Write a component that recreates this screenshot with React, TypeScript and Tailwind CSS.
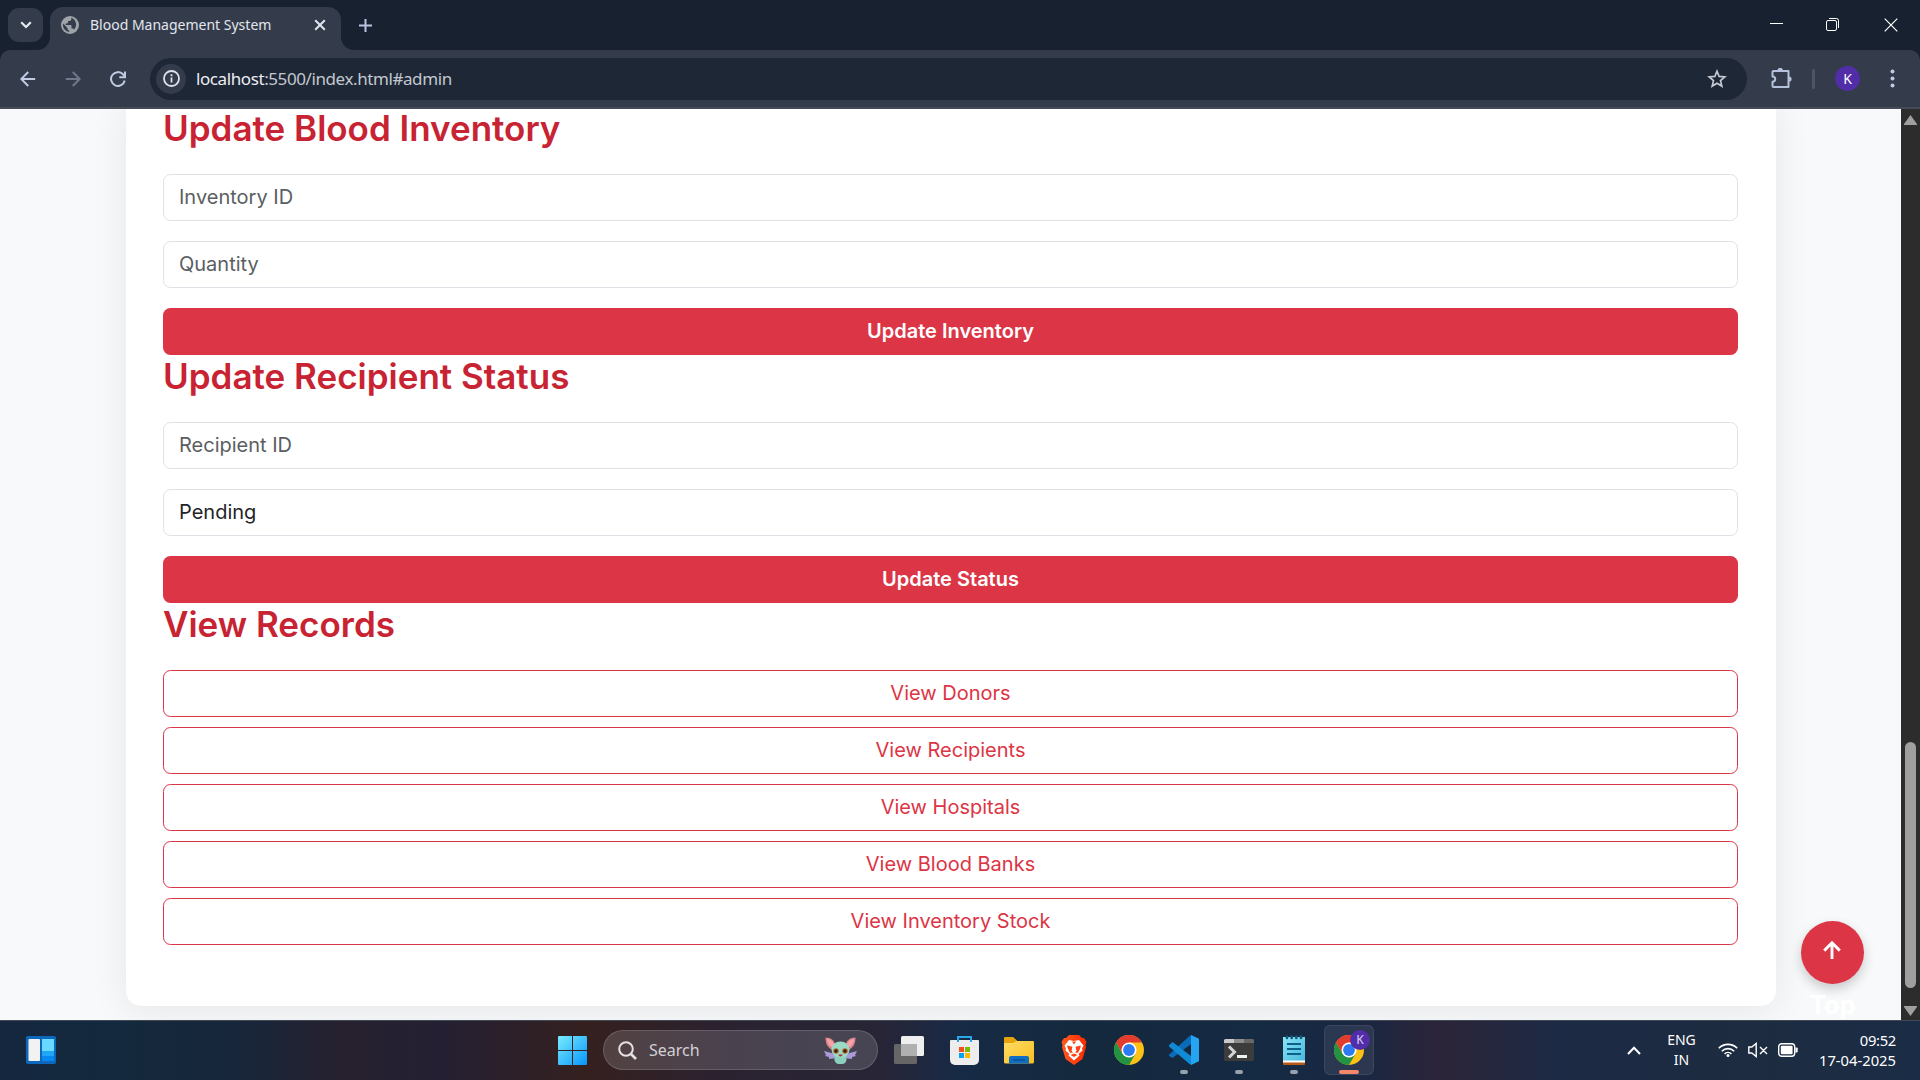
import React from "react";

const SEGOE = "font-['Noto_Sans',sans-serif]";

function Globe() {
  return (
    <svg width="18" height="18" viewBox="0 0 18 18" className="shrink-0">
      <circle cx="9" cy="9" r="9" fill="#a0a4a9" />
      <path d="M10.3 1.8v1.4c0 .9-.7 1.7-1.6 1.7H7v1.6c0 .5-.4.9-.9.9H4.600v1.700h5c.5 0 .9.400.9.900v2.400h.900c.8 0 1.400.5 1.600 1.200A7.200 7.200 0 0 0 10.300 1.800zM8.200 16.100v-1.600c-.9 0-1.700-.8-1.700-1.700v-.9L2.100 7.400A7.200 7.200 0 0 0 8.200 16.100z" fill="#343c4c" />
    </svg>
  );
}

function BrowserTop() {
  return (
    <div className={`h-[109px] shrink-0 bg-[#182130] ${SEGOE}`}>
      <div className="flex h-[50px] pl-2">
        <div className="mt-2 flex h-[34px] w-[35px] items-center justify-center rounded-[11px] bg-[#343c4c]">
          <svg width="12" height="8" viewBox="0 0 12 8" fill="none" stroke="#e6e9ef" strokeWidth="2.200"><path d="M1.200 1.200 6 6l4.800-4.800" /></svg>
        </div>
        <div className="relative ml-[7px] mt-[7px] flex h-[43px] w-[291px] items-center rounded-t-[13px] bg-[#343c4c] pb-[7px] pl-[11px]">
          <svg className="absolute -left-[13px] bottom-0" width="13" height="13"><path d="M13 0v13H0A13 13 0 0 0 13 0z" fill="#343c4c" /></svg>
          <svg className="absolute -right-[13px] bottom-0" width="13" height="13"><path d="M0 0v13h13A13 13 0 0 1 0 0z" fill="#343c4c" /></svg>
          <Globe />
          <span className="ml-[11px] w-[181px] whitespace-nowrap text-[14px] leading-5 text-[#e3e6ec]">Blood Management System</span>
          <svg width="12" height="12" viewBox="0 0 12 12" stroke="#e3e6ec" strokeWidth="2" className="ml-[43px]"><path d="M1.200 1.200l9.600 9.600M10.800 1.200l-9.600 9.600" /></svg>
        </div>
        <svg width="13" height="13" viewBox="0 0 13 13" stroke="#b9c5e0" strokeWidth="2" className="ml-[18px] mt-[19px]"><path d="M6.500 0v13M0 6.500h13" /></svg>
        <div className="ml-auto flex h-[49px] items-center pr-[22px]">
          <svg width="13" height="13" stroke="#fff"><path d="M0 5.500h13" /></svg>
          <svg width="14" height="14" className="ml-[43px]" fill="none" stroke="#fff">
            <rect x=".5" y="2.500" width="10" height="10" rx="1.500" />
            <path d="M3 .5h7.500a2 2 0 0 1 2 2V10" />
          </svg>
          <svg width="14" height="14" className="ml-[44px]" stroke="#fff" strokeWidth="1.200"><path d="M.7.7l12.600 12.600M13.300.7.7 13.300" /></svg>
        </div>
      </div>
      <div className="flex h-[59px] items-center rounded-t-[10px] border-b-2 border-[#454b57] bg-[#343c4c] pl-5">
        <svg width="16" height="16" viewBox="0 0 16 16" fill="none" stroke="#c0cbe3" strokeWidth="2"><path d="M15.200 8H1.500M8.200 1 1.300 8l6.900 7" /></svg>
        <svg width="16" height="16" viewBox="0 0 16 16" fill="none" stroke="#6f798b" strokeWidth="2" className="ml-[29px]"><path d="M.8 8h13.700M7.800 1l6.900 7-6.900 7" /></svg>
        <svg width="16" height="16" viewBox="0 0 16 16" fill="none" stroke="#c0cbe3" strokeWidth="2" className="ml-[29px]">
          <path d="M14.700 9.500A6.900 6.900 0 1 1 13 3.300l1.600 1.800" /><path d="M15 .5v5.700H9.300" />
        </svg>
        <div className="ml-6 flex h-[42px] w-[1597px] items-center rounded-full bg-[#1e2736] pl-1.5">
          <div className="flex size-[30px] items-center justify-center rounded-full bg-[#343c4c]">
            <svg width="17" height="17" viewBox="0 0 17 17" fill="none" stroke="#dfe2ea" strokeWidth="1.800"><circle cx="8.500" cy="8.500" r="7.500" /><path d="M8.500 7.500v5M8.500 4.300v1.900" /></svg>
          </div>
          <span className="ml-[10px] whitespace-nowrap text-[17px] leading-6 tracking-[-0.41px] text-[#c3c7cf]"><span className="text-[#eceef3]">localhost</span>:5500/index.html#admin</span>
          <svg width="20" height="20" viewBox="0 0 20 20" fill="none" stroke="#c6c8d0" strokeWidth="1.700" className="ml-auto mr-5"><path d="M10 2.200l2.150 5.250 5.650.45-4.300 3.700 1.350 5.500L10 14.150 5.150 17.100l1.350-5.500-4.300-3.700 5.650-.45z" /></svg>
        </div>
        <svg width="21" height="21" viewBox="0 0 21 21" className="ml-6">
          <path d="M2.500 3h15v5.300V19h-15a1 1 0 0 1-1-1v-4.200a2.700 2.700 0 0 0 0-5.400V4a1 1 0 0 1 1-1z" fill="none" stroke="#b5c2dc" strokeWidth="2" strokeLinejoin="round" />
          <path d="M6.500 2.500a2.700 2.700 0 0 1 5.400 0zM18 8.400a2.600 2.600 0 0 1 0 5.200z" fill="#b5c2dc" />
        </svg>
        <div className="ml-5 h-5 w-[3px] rounded bg-[#4c5566]" />
        <div className="ml-5 flex size-[25px] items-center justify-center rounded-full bg-[#512da8] text-[14px] leading-none text-white">K</div>
        <svg width="5" height="19" fill="#c0cbe3" className="ml-[30px]"><circle cx="2.500" cy="2.500" r="2" /><circle cx="2.500" cy="9.500" r="2" /><circle cx="2.500" cy="16.500" r="2" /></svg>
      </div>
    </div>
  );
}

const Heading = ({ children }: { children: string }) => (
  <h2 className="mb-[25px] h-[42px] text-[35px] font-semibold leading-[42px] text-[#c82333]">{children}</h2>
);
const Field = ({ children, dark }: { children: string; dark?: boolean }) => (
  <div className={`mb-5 flex h-[47px] items-center rounded-[7.500px] border border-[#dee2e6] px-[15px] pb-0.5 text-xl ${dark ? "text-[#212529]" : "text-[#5a5e62]"}`}>{children}</div>
);
const Solid = ({ children }: { children: string }) => (
  <button className="block h-[47px] w-full rounded-[7.500px] bg-[#dc3545] pb-0.5 text-center text-xl font-semibold text-white">{children}</button>
);

function Page() {
  return (
    <div className="relative flex min-h-0 flex-1 overflow-hidden bg-[#f8f9fb]">
      <main className="-mt-2 ml-[126px] h-[905px] w-[1650px] shrink-0 rounded-b-[15px] bg-white pl-[37px] pr-[38px] pt-1.5 font-['Inter',sans-serif] shadow-[0_5px_37px_rgba(0,0,0,0.08)]">
        <Heading>Update Blood Inventory</Heading>
        <Field>Inventory ID</Field>
        <Field>Quantity</Field>
        <Solid>Update Inventory</Solid>
        <Heading>Update Recipient Status</Heading>
        <Field>Recipient ID</Field>
        <Field dark>Pending</Field>
        <Solid>Update Status</Solid>
        <Heading>View Records</Heading>
        <div className="flex flex-col gap-2.5">
          {["View Donors", "View Recipients", "View Hospitals", "View Blood Banks", "View Inventory Stock"].map((t) => (
            <button key={t} className="h-[47px] rounded-[7.500px] border border-[#dc3545] pb-0.5 text-xl text-[#dc3545]">{t}</button>
          ))}
        </div>
      </main>
      <div className="absolute left-[1801px] top-[812px] flex w-[63px] flex-col items-center font-['Inter',sans-serif]">
        <div className="flex size-[63px] items-center justify-center rounded-full bg-[#dc3545] pb-1.5 pr-px shadow-[0_5px_12px_rgba(0,0,0,0.2)]">
          <svg width="18" height="18" viewBox="0 0 18 18" fill="none" stroke="#fff" strokeWidth="2.900"><path d="M9 18V2M1.200 9.600 9 1.800l7.800 7.800" /></svg>
        </div>
        <span className="mt-[3px] text-[25px] font-bold leading-[37px] text-white">Top</span>
      </div>
      <div className="ml-auto flex w-[19px] flex-col items-center bg-[#2c2c2c]">
        <svg width="13" height="10" className="mt-[6px]" fill="#9f9f9f"><path d="M6.500 0 13 9v1H0V9z" /></svg>
        <div className="mt-[617px] h-[246px] w-[11px] rounded-full bg-[#9f9f9f]" />
        <svg width="13" height="10" className="mt-[18px]" fill="#9f9f9f"><path d="M6.500 10 13 1V0H0v1z" /></svg>
      </div>
    </div>
  );
}

function Chrome() {
  return (
    <svg width="30" height="30" viewBox="0 0 30 30">
      <circle cx="15" cy="15" r="15" fill="#fbc116" />
      <path d="M2 7.500A15 15 0 0 1 28 7.500H15L8.500 18.800z" fill="#e33b2e" />
      <path d="M2 7.500A15 15 0 0 0 15 30l6.500-11.200H8.500z" fill="#229342" />
      <circle cx="15" cy="15" r="7.500" fill="#fff" /><circle cx="15" cy="15" r="5.900" fill="#2c7bf2" />
    </svg>
  );
}

const Store = () => (
  <svg width="29" height="29" viewBox="0 0 29 29">
    <path d="M0 5a1 1 0 0 1 1-1h27a1 1 0 0 1 1 1v19a5 5 0 0 1-5 5H5a5 5 0 0 1-5-5z" fill="#ededee" />
    <path d="M8 6V1h13v5" fill="none" stroke="#28a8ea" strokeWidth="2" />
    <path d="M9 11h5v5H9z" fill="#f25022" /><path d="M15 11h5v5h-5z" fill="#7fba00" /><path d="M9 17h5v5H9z" fill="#00a4ef" /><path d="M15 17h5v5h-5z" fill="#ffb900" />
  </svg>
);
const TaskView = () => (
  <svg width="30" height="28" viewBox="0 0 30 28">
    <rect x="7" width="23" height="20" rx="1.500" fill="#efefef" />
    <rect y="8" width="23" height="20" rx="1.500" fill="#666" /><path d="M7 8h16v12H7z" fill="#b0b0b0" />
  </svg>
);
const Folder = () => (
  <svg width="30" height="27" viewBox="0 0 30 27">
    <path d="M0 1a1 1 0 0 1 1-1h8l4 3.500V8H0z" fill="#e5a50a" />
    <defs><linearGradient id="fo" x2="1" y2="1"><stop stopColor="#ffdc66" /><stop offset="1" stopColor="#f9be20" /></linearGradient></defs>
    <path d="M0 6h9l4-2h16a1 1 0 0 1 1 1v20a1.500 1.500 0 0 1-1.500 1.500h-27A1.500 1.500 0 0 1 0 25z" fill="url(#fo)" />
    <path d="M5 26.500V21a2 2 0 0 1 2-2h16a2 2 0 0 1 2 2v5.500z" fill="#0f6fc5" /><path d="M9 23h12" stroke="#0a4a86" strokeWidth="1.300" />
  </svg>
);
const Brave = () => (
  <svg width="26" height="30" viewBox="0 0 26 30">
    <defs><linearGradient id="br" x2="1"><stop stopColor="#ff5a1f" /><stop offset="1" stopColor="#ff2a00" /></linearGradient></defs>
    <path d="M8 0h10l3 3h2l2.500 4-1 3 .5 2-3.500 12L13 30 4.500 24 1 12l.5-2-1-3L3 3h2z" fill="url(#br)" />
    <path d="M8 5l5 1 5-1 4.500 5.500-1.500 3 .5 2-4 3.500 1 1.500-5.500 5-5.500-5 1-1.500-4-3.500.5-2-1.500-3z" fill="#fff" />
    <path d="M6 10.500l5.500 1.200-1 4 1.500 2H9L7 14zM20 10.500l-5.500 1.200 1 4-1.500 2h3l2-3.700zM9.500 20l3.500-1.500 3.500 1.500L13 22zM11 6.500l2 3 2-3z" fill="#ff4010" />
  </svg>
);
const Code = () => (
  <svg width="30" height="30" viewBox="0 0 30 30">
    <path d="M0 19.800 20.500 1l1.500-.8V9L3.500 23 0 21z" fill="#0a6cb8" />
    <path d="M0 10.200 3.500 7 22 21v8.800l-1.500-.8L0 11.500z" fill="#118ad6" />
    <path d="M22 0l7 3.200a1.500 1.500 0 0 1 1 1.400v20.800a1.500 1.500 0 0 1-1 1.400L22 30z" fill="#25a4f2" />
  </svg>
);
const Terminal = () => (
  <svg width="30" height="22" viewBox="0 0 30 22">
    <rect width="30" height="22" rx="1.500" fill="#3c3c3c" /><path d="M0 4V1.500A1.500 1.500 0 0 1 1.500 0H10v4z" fill="#c9c9c9" /><path d="M10 0h10v4H10z" fill="#8d8d8d" /><path d="M20 0h8.500A1.500 1.500 0 0 1 30 1.500V4H20z" fill="#686868" />
    <path d="M5 7.500l5.500 5.500L5 18.500" fill="none" stroke="#d5d5d5" strokeWidth="3" /><path d="M13 16h10v3H13z" fill="#f0f0f0" />
  </svg>
);
const Notepad = () => (
  <svg width="22" height="30" viewBox="0 0 22 30">
    <rect y="4" width="22" height="26" rx="1" fill="#b65a17" /><path d="M0 25h22v2.500H0z" fill="#fff" />
    <defs><linearGradient id="np" x2="1" y2="1"><stop stopColor="#8be4f7" /><stop offset="1" stopColor="#46b9dc" /></linearGradient></defs>
    <path d="M0 2h22v23.500H0z" fill="url(#np)" />
    <path d="M4 9h14M4 14h14M4 19h14" stroke="#0d6188" strokeWidth="2" />
    <path d="M4 1.500v1.500M8.700 1.500v1.500M13.300 1.500v1.500M18 1.500v1.500" stroke="#125a78" strokeWidth="2.600" strokeLinecap="round" />
  </svg>
);
const Creature = () => (
  <svg width="33" height="27" viewBox="0 0 33 27">
    <path d="M11 17 0 14l2 4-1 1 4 1v2l8-1zM22 17l11-3-2 4 1 1-4 1v2l-8-1z" fill="#a99bd8" />
    <path d="M1.500.5c6 0 9 3 10 8l-4 4C3 10 1.500 6 1.500.5zM31.500.5c-6 0-9 3-10 8l4 4c4.500-2.500 6-6.500 6-12z" fill="#d9838c" />
    <path d="M3 1.800c4 .5 6.500 3 7.500 6.500L8 10.500C4.500 8.500 3 5 3 1.800zM30 1.800c-4 .5-6.500 3-7.500 6.500l2.500 2.200c3.500-2 5-5.500 5-8.700z" fill="#f7a3a6" />
    <path d="M10.500 18h12v4.500a4.500 4.500 0 0 1-4.500 4.500h-3a4.500 4.500 0 0 1-4.500-4.500z" fill="#8ccfbd" /><ellipse cx="16.500" cy="12.500" rx="9" ry="8" fill="#9bd9c5" />
    <circle cx="12" cy="14" r="2.800" fill="#b06a2c" /><circle cx="21" cy="14" r="2.800" fill="#b06a2c" /><circle cx="12" cy="14" r="1.700" fill="#3b1b10" /><circle cx="21" cy="14" r="1.700" fill="#3b1b10" />
    <path d="M14.500 17.500h4a2 2 0 0 1-4 0z" fill="#a93240" />
  </svg>
);

function Slot({ children, dot, active }: { children: React.ReactNode; dot?: boolean; active?: boolean }) {
  return (
    <div className={`relative flex h-[50px] w-[50px] shrink-0 items-center justify-center rounded-md ${active ? "border border-white/8 bg-white/8" : ""}`}>
      {children}
      {dot && <div className="absolute bottom-[1px] h-1 w-2 rounded-full bg-[#98a1ae]" />}
      {active && <div className="absolute bottom-0 h-1 w-5 rounded-full bg-[#f4866a]" />}
    </div>
  );
}

function Taskbar() {
  return (
    <div className={`flex h-[60px] shrink-0 items-center border-t border-[#414954] bg-[linear-gradient(90deg,#14273f_0px,#14293d_120px,#17263b_240px,#27212f_340px,#242033_440px,#35201f_590px,#2b2230_720px,#272536_880px,#172a46_960px,#14293d_1080px,#152a43_1250px,#1a2742_1360px,#2b2438_1440px,#1c2a45_1560px,#1d2c40_1750px,#1b2c46_1920px)] pb-px text-white ${SEGOE}`}>
      <svg width="30" height="28" viewBox="0 0 30 28" className="ml-[26px]">
        <rect width="30" height="28" rx="2" fill="#0c68bd" /><rect x="2.500" y="3" width="11.500" height="22" rx="1" fill="#f2f2f2" /><path d="M16 3h12v12H16z" fill="#6ad9ff" /><path d="M16 15h12v5H16z" fill="#21a5f7" /><path d="M16 20h12v5H16z" fill="#0689f0" />
      </svg>
      <svg width="29" height="29" viewBox="0 0 29 29" className="ml-[502px]">
        <defs><linearGradient id="wi" gradientUnits="userSpaceOnUse" x1="0" y1="0" x2="29" y2="29"><stop stopColor="#78edff" /><stop offset="1" stopColor="#0794fb" /></linearGradient></defs>
        <path d="M0 1a1 1 0 0 1 1-1h13v14H0zM15 0h13a1 1 0 0 1 1 1v13H15zM0 15h14v14H1a1 1 0 0 1-1-1zM15 15h14v13a1 1 0 0 1-1 1H15z" fill="url(#wi)" />
      </svg>
      <div className="ml-4 flex h-10 w-[275px] items-center rounded-full border border-white/15 bg-white/15 pl-3.5">
        <svg width="19" height="19" viewBox="0 0 19 19" fill="none" stroke="#e4e0e4" strokeWidth="2"><circle cx="8" cy="8" r="6.800" /><path d="M13 13l5 5" strokeWidth="2.600" /></svg>
        <span className="ml-3 text-[16px] leading-6 text-[#d4d0d6]">Search</span>
        <div className="ml-auto mr-5"><Creature /></div>
      </div>
      <div className="ml-[6px] flex gap-[5px]">
        <Slot><TaskView /></Slot>
        <Slot><Store /></Slot>
        <Slot><Folder /></Slot>
        <Slot><Brave /></Slot>
        <Slot><Chrome /></Slot>
        <Slot dot><Code /></Slot>
        <Slot dot><Terminal /></Slot>
        <Slot dot><Notepad /></Slot>
        <Slot active>
          <Chrome />
          <div className="absolute right-[3px] top-1 flex size-5 items-center justify-center rounded-full bg-[#512da8] text-xs font-medium text-[#cdbdf0]">K</div>
        </Slot>
      </div>
      <div className="ml-auto flex items-center">
        <svg width="14" height="9" viewBox="0 0 14 9" fill="none" stroke="#fff" strokeWidth="2"><path d="M1 8l6-6.300L13 8" /></svg>
        <div className="ml-[26px] flex w-[29px] flex-col items-center text-[14px] leading-5">
          <span>ENG</span>
          <span>IN</span>
        </div>
        <svg width="20" height="16" viewBox="0 0 20 16" fill="none" stroke="#fff" strokeWidth="1.600" className="ml-[22px]"><path d="M.8 6.200a13 13 0 0 1 18.400 0M3.800 9.200a8.800 8.800 0 0 1 12.400 0M6.600 11.900a4.900 4.900 0 0 1 6.800 0" /><circle cx="10" cy="13.500" r="1.500" fill="#fff" stroke="none" /></svg>
        <svg width="20" height="16" viewBox="0 0 20 16" fill="none" stroke="#fff" strokeWidth="1.400" className="ml-[10px]"><path d="M.8 5h3L8.200 1.500v13L3.800 11h-3zM12 5l7 7M19 5l-7 7" /></svg>
        <svg width="20" height="14" viewBox="0 0 20 14" className="ml-[10px]"><rect x=".7" y=".7" width="16" height="12.600" rx="3" fill="none" stroke="#fff" strokeWidth="1.400" /><rect x="2.800" y="2.800" width="11.800" height="8.400" rx="1" fill="#fff" /><path d="M17.500 4.500h1.200a1 1 0 0 1 1 1v3a1 1 0 0 1-1 1h-1.200z" fill="#fff" /></svg>
        <div className="ml-[21px] mr-6 flex w-[77px] flex-col items-end whitespace-nowrap text-[14.750px] leading-5">
          <span className="tracking-[-0.3px]">09:52</span>
          <span>17-04-2025</span>
        </div>
      </div>
    </div>
  );
}

export default function App() {
  return (
    <div className="flex h-[1080px] w-[1920px] flex-col overflow-hidden">
      <BrowserTop />
      <Page />
      <Taskbar />
    </div>
  );
}
